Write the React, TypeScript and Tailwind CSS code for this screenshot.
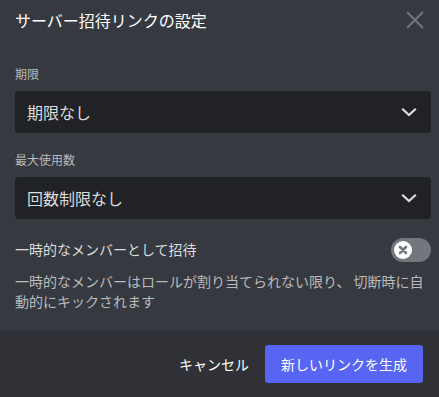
const font = {
  fontFamily: '"Noto Sans CJK JP", "Noto Sans", sans-serif',
};

const Chevron = () => (
  <svg width="16" height="16" viewBox="0 0 16 16" fill="none">
    <path
      d="M2 5.5 L8 11 L14 5.5"
      stroke="#dcddde"
      strokeWidth="2.2"
      strokeLinecap="square"
    />
  </svg>
);

const Select = ({ value }: { value: string }) => (
  <div className="flex h-[42px] items-center justify-between rounded-[4px] bg-[#202225] pl-3 pr-[14px]">
    <span className="text-[16px] leading-5 text-[#dcddde]">{value}</span>
    <Chevron />
  </div>
);

const Toggle = () => (
  <div className="flex h-6 w-10 items-center rounded-full bg-[#72767d] px-[3px]">
    <div className="flex h-[18px] w-[18px] items-center justify-center rounded-full bg-white">
      <svg width="10" height="10" viewBox="0 0 10 10">
        <path
          d="M2 2 L8 8 M8 2 L2 8"
          stroke="#72767d"
          strokeWidth="2.6"
          strokeLinecap="round"
        />
      </svg>
    </div>
  </div>
);

export default function App() {
  return (
    <div
      className="flex h-[397px] w-[439px] flex-col bg-[#36393f]"
      style={font}
    >
      {/* Header */}
      <div className="flex items-start justify-between pl-[15px] pr-[15px] pt-[10px]">
        <h2 className="text-[16px] leading-5 text-white">
          サーバー招待リンクの設定
        </h2>
        <button className="mt-[1px] text-[#72767d]" aria-label="close">
          <svg width="18" height="18" viewBox="0 0 18 18">
            <path
              d="M1 1 L17 17 M17 1 L1 17"
              stroke="currentColor"
              strokeWidth="2"
            />
          </svg>
        </button>
      </div>

      {/* Body */}
      <div className="flex-1 pl-[15px] pr-2 pt-9">
        <div className="mb-[9px] text-[12px] leading-4 text-[#b9bbbe]">期限</div>
        <Select value="期限なし" />

        <div className="mb-[9px] mt-[19px] text-[12px] leading-4 text-[#b9bbbe]">
          最大使用数
        </div>
        <Select value="回数制限なし" />

        <div className="mt-[19px] flex items-center justify-between">
          <span className="-mt-[3px] text-[14px] leading-5 text-[#dcddde]">
            一時的なメンバーとして招待
          </span>
          <Toggle />
        </div>

        <p className="mt-[9px] whitespace-nowrap text-[14px] leading-5 text-[#b9bbbe]">
          一時的なメンバーはロールが割り当てられない限り、 切断時に自
          <br />
          動的にキックされます
        </p>
      </div>

      {/* Footer */}
      <div className="flex h-[66px] items-center justify-end bg-[#2f3136] pr-4">
        <button className="px-4 text-[14px] leading-5 text-white">
          キャンセル
        </button>
        <button className="h-[38px] rounded-[3px] bg-[#5865f2] px-4 text-[14px] leading-5 text-white">
          新しいリンクを生成
        </button>
      </div>
    </div>
  );
}
